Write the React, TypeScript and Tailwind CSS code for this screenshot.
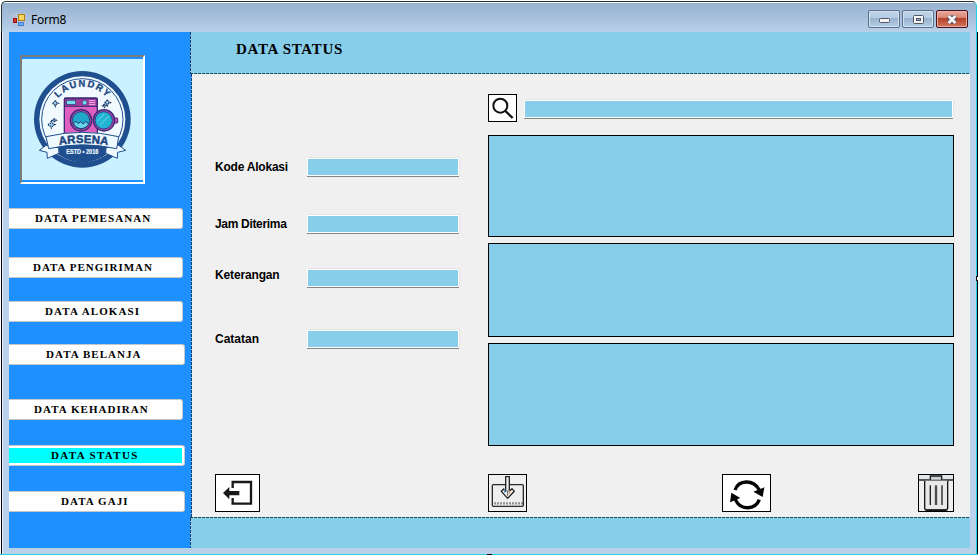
import React from "react";

type NavItem = { label: string; box: string; text: string; active?: boolean };

const navItems: NavItem[] = [
  { label: "DATA PEMESANAN", box: "mt-[24px] w-[174px]", text: "pl-[26px] tracking-[1.06px]" },
  { label: "DATA PENGIRIMAN", box: "mt-[28px] w-[174px]", text: "pl-[24px] tracking-[1px]" },
  { label: "DATA ALOKASI", box: "mt-[23px] w-[174px]", text: "pl-[36px] tracking-[1.12px]" },
  { label: "DATA BELANJA", box: "mt-[22px] w-[176px]", text: "pl-[37px] tracking-[1.04px]" },
  { label: "DATA KEHADIRAN", box: "mt-[34px] w-[174px]", text: "pl-[25px] tracking-[1.05px]" },
  { label: "DATA STATUS", box: "mt-[25px] w-[176px]", text: "pl-[42px] tracking-[1.35px]", active: true },
  { label: "DATA GAJI", box: "mt-[25px] w-[176px]", text: "pl-[52px] tracking-[1.08px]" },
];

const fields = [
  { label: "Kode Alokasi", row: "mt-[84px]", text: "pl-[23px] pt-[2px] tracking-[-0.22px]" },
  { label: "Jam Diterima", row: "mt-[38px]", text: "pl-[23px] pt-[2px] tracking-[-0.32px]" },
  { label: "Keterangan", row: "mt-[35px]", text: "pl-[23px] -mt-[1px] tracking-[-0.15px]" },
  { label: "Catatan", row: "mt-[42px]", text: "pl-[23px] pt-[2px] tracking-[0px]" },
];

function Logo() {
  return (
    <svg viewBox="36 42 363 363" className="block h-[121px] w-[121px]">
      <rect x="36" y="42" width="363" height="363" fill="#c9f1ff" />
      <circle cx="217" cy="223" r="145" fill="#1f4f8f" />
      <circle cx="217" cy="223" r="129" fill="#f1faff" />
      <circle cx="217" cy="223" r="122" fill="none" stroke="#1f4f8f" strokeWidth="3" />
      <path d="M108 285 A122 122 0 0 0 326 285 Q217 248 108 285Z" fill="#1f4f8f" />
      <path id="arcTop" d="M144 160 A95 95 0 0 1 292 160" fill="none" />
      <text fontSize="28" fontWeight="700" fill="#1d477f" stroke="#1d477f" strokeWidth="1" letterSpacing="4.6" fontFamily="Liberation Sans, sans-serif">
        <textPath href="#arcTop" startOffset="1">LAUNDRY</textPath>
      </text>
      <rect x="163" y="159" width="99" height="108" rx="4" fill="#df5fc0" stroke="#3b2a76" strokeWidth="4" />
      <path d="M164 161H261V184H164Z" fill="#a33a9a" stroke="#3b2a76" strokeWidth="3" />
      <rect x="170" y="166" width="27" height="12" fill="#79dbed" stroke="#24407a" strokeWidth="2" />
      <circle cx="224" cy="173" r="7" fill="#79dbed" stroke="#24407a" strokeWidth="2" />
      <path d="M237 167H256M237 173H256M237 179H256" stroke="#f3b7e6" strokeWidth="3" />
      <rect x="311" y="219" width="12" height="15" rx="2" fill="#d44fb5" stroke="#3b2a76" strokeWidth="3" />
      <circle cx="282" cy="226" r="32" fill="#b347ad" stroke="#3b2a76" strokeWidth="4" />
      <circle cx="281" cy="226" r="26" fill="#22b4d2" stroke="#28457e" strokeWidth="3" />
      <path d="M262 228L283 207M270 240L296 214" stroke="#4ccbe4" strokeWidth="4" fill="none" />
      <circle cx="213" cy="226" r="32" fill="#b347ad" stroke="#3b2a76" strokeWidth="4" />
      <circle cx="213" cy="226" r="26" fill="#20a7c9" stroke="#28457e" strokeWidth="3" />
      <path d="M190 234L198 229L204 236L212 230L219 237L227 230L236 236Q231 249 213 251Q196 249 190 234Z" fill="#69d5ec" stroke="#1b3f70" strokeWidth="3" />
      <g fill="#a9e2f7" stroke="#1d3766" strokeWidth="4" strokeDasharray="4 2">
        <path d="M136 166l3 6 6 3-6 3-3 6-3-6-6-3 6-3z" />
        <path d="M292 164l3 6 6 3-6 3-3 6-3-6-6-3 6-3z" />
        <path d="M124 229l4 7 7 3-7 3-4 7-4-7-7-3 7-3z" />
        <path d="M133 220l2 4 4 2-4 2-2 4-2-4-4-2 4-2zM283 177l2 3 3 2-3 2-2 3-2-3-3-2 3-2z" />
      </g>
      <path d="M108 301L88 316L111 322L112 340L147 325L146 308ZM326 301L347 316L323 322L322 340L287 325L288 308Z" fill="#effaff" stroke="#1f4f8f" strokeWidth="3" />
      <path d="M108 275Q217 249 326 275L320 311Q217 288 116 311Z" fill="#effaff" stroke="#1f4f8f" strokeWidth="3" />
      <path id="arcName" d="M148 300Q217 288 292 300" fill="none" />
      <text fontSize="34" fontWeight="700" fill="#1d477f" stroke="#1d477f" strokeWidth="1.5" letterSpacing="0.5" fontFamily="Liberation Sans, sans-serif">
        <textPath href="#arcName">ARSENA</textPath>
      </text>
      <text x="169" y="327" textLength="96" lengthAdjust="spacingAndGlyphs" fontSize="21" fontWeight="700" fill="#f1faff" stroke="#f1faff" strokeWidth="0.6" fontFamily="Liberation Sans, sans-serif">
        ESTD • 2016
      </text>
    </svg>
  );
}

function TextInput({ className }: { className: string }) {
  return (
    <div className={`h-[19px] border-b border-[#858585] shadow-[1px_-1px_0_#e5e5e5] ${className}`}>
      <div className="h-[18px] border border-white bg-[#87ceeb]" />
    </div>
  );
}

function FormIcon() {
  return (
    <svg viewBox="36 39 42 42" className="h-[14px] w-[14px]" shapeRendering="crispEdges">
      <rect x="36" y="39" width="42" height="42" fill="#b3c3da" />
      <rect x="55" y="43" width="19" height="19" fill="#fbd560" stroke="#b47d0a" strokeWidth="3" />
      <rect x="40" y="55" width="10" height="13" fill="#d8372d" stroke="#951510" strokeWidth="3" />
      <rect x="55" y="67" width="14" height="10" fill="#68a8fa" stroke="#2b64c8" strokeWidth="2" />
    </svg>
  );
}

function CaptionButtons() {
  const cool =
    "flex h-[18px] w-[32px] items-center justify-center rounded-[2px] border border-[#5d6f89] bg-[linear-gradient(#c1d4e9_0%,#b5cce4_44%,#98b2cd_45%,#b5d0e9_100%)] shadow-[inset_0_0_0_1px_#d2e1f0]";
  return (
    <div className="mr-[1px] mt-[8px] flex gap-[2px]">
      <div className={cool}>
        <svg viewBox="0 0 11 5" className="mt-[3px] h-[5px] w-[11px]">
          <rect x=".5" y=".5" width="10" height="4" rx="1" fill="#f4f4f4" stroke="#525665" />
        </svg>
      </div>
      <div className={cool}>
        <svg viewBox="0 0 11 9" className="h-[9px] w-[11px]">
          <rect x=".5" y=".5" width="10" height="8" rx="1" fill="#f4f4f4" stroke="#525665" />
          <rect x="3.5" y="3.5" width="4" height="2" fill="#91aaca" stroke="#525665" />
        </svg>
      </div>
      <div className="flex h-[18px] w-[32px] items-center justify-center rounded-[2px] border border-[#48131b] bg-[linear-gradient(#e9a99c_0%,#d98373_44%,#b63e27_45%,#d4765b_100%)] shadow-[inset_0_0_0_1px_#e8aea4]">
        <svg viewBox="0 0 12 9" className="h-[9px] w-[12px]">
          <path d="M2.5 1L9.5 8M9.5 1L2.5 8" stroke="#525665" strokeWidth="4.8" />
          <path d="M2.6 1.1L9.4 7.9M9.4 1.1L2.6 7.9" stroke="#f7f7f7" strokeWidth="2.8" />
        </svg>
      </div>
    </div>
  );
}

function ExitIcon() {
  return (
    <svg viewBox="48 45 129 108" className="block h-full w-full">
      <path d="M98 84V66H153V131H98V114" fill="none" stroke="#191919" strokeWidth="7" />
      <path d="M69 99L88 81V93H118V106H88V118Z" fill="#191919" />
    </svg>
  );
}

function SaveIcon() {
  return (
    <svg viewBox="57 135 111 108" className="block h-full w-full">
      <rect x="67" y="164" width="93" height="65" rx="3" fill="#eeeeee" stroke="#2b2b2b" strokeWidth="4" />
      <path d="M73.5 220H159" stroke="#333" strokeWidth="7" strokeDasharray="3 6" />
      <path d="M107 140H118V184L126 176L133 184L113 205L94 184L101 177L107 184Z" fill="#f1f1f1" stroke="#222" strokeWidth="4" strokeLinejoin="round" />
      <path d="M104 177V189" stroke="#65a6d8" strokeWidth="3" />
      <path d="M119 181V192" stroke="#ed9a58" strokeWidth="3" />
      <path d="M113 181V197" stroke="#555" strokeWidth="3" />
    </svg>
  );
}

function RefreshIcon() {
  return (
    <svg viewBox="69 135 141 108" className="block h-full w-full">
      <path d="M105 180C116 149 160 147 178 180M178 209C166 241 120 242 106 208" fill="none" stroke="#050505" strokeWidth="10" />
      <path d="M160 185L193 172L188 201ZM90 217L94 188L121 204Z" fill="#050505" />
    </svg>
  );
}

function TrashIcon() {
  return (
    <svg viewBox="657 135 102 108" className="block h-full w-full">
      <rect x="657" y="135" width="102" height="16" fill="#e3e7ea" />
      <path d="M657 150H759" stroke="#202326" strokeWidth="4" />
      <path d="M691 149V138H725V149" fill="#ccd1d4" stroke="#181818" strokeWidth="4" />
      <path d="M674 152V233Q674 241 682 241H735Q743 241 743 233V152" fill="#e8e8e8" stroke="#151515" strokeWidth="4" />
      <path d="M679 240H739" stroke="#151515" strokeWidth="5" />
      <path d="M691 166V225M726 166V225" stroke="#202020" strokeWidth="4" />
      <path d="M708 166V225" stroke="#4b4b4b" strokeWidth="7" />
    </svg>
  );
}

const dashX = "h-px bg-[repeating-linear-gradient(90deg,#1d4d60_0_3px,#87ceeb_3px_4px)]";
const dashY = "w-px bg-[repeating-linear-gradient(180deg,#153f70_0_3px,#87ceeb_3px_4px)]";

export default function App() {
  return (
    <div className="relative h-[555px] w-[978px] overflow-hidden bg-[linear-gradient(90deg,#fff_1px,#000_1px_2px,#e8f1fa_2px_3px,#b9d1ea_3px)] font-['Liberation_Sans',Arial,sans-serif] text-black">
      <div className="flex h-full w-full flex-col border-b border-[#22d0ea] bg-[linear-gradient(270deg,#000_1px,#22d0ea_1px_2px,transparent_2px)] pl-[9px] pr-[8px]">
        <header className="-ml-[9px] -mr-[8px] h-[32px] shrink-0 bg-white pt-px">
          <div className="ml-px mr-px flex h-[31px] justify-between rounded-t-[5px] border-l border-r border-t border-l-[#26352c] border-r-[#22d0ea] border-t-[#26352c] bg-[linear-gradient(#f4f8fb_0_1px,#98b3d0_1px,#a6bfdb_50%,#b9d0ea)] pl-[10px] pr-[7px]">
            <div className="flex pt-[11px]">
              <FormIcon />
              <span className="ml-[5px] font-['Noto_Sans',sans-serif] text-[12px] leading-[14px] tracking-[-0.3px]">Form8</span>
            </div>
            <CaptionButtons />
          </div>
        </header>

        <div className="flex h-[516px] w-[961px] shrink-0">
          <aside className="w-[181px] bg-[#1e90ff] pt-[23px]">
            <div className="ml-[11px] h-[129px] w-[125px] border-2 border-b-white border-l-[#7c7c7c] border-r-white border-t-[#7c7c7c] py-[2px]">
              <Logo />
            </div>
            <nav>
              {navItems.map((item) => (
                <button
                  key={item.label}
                  className={`block h-[21px] rounded-r-[3px] border-b border-r border-t border-[#c4c8cb] text-left font-['Liberation_Serif',serif] text-[11px] font-bold leading-[19px] ${item.active ? "bg-white py-[2px] pr-[2px]" : "bg-[#fefefe]"} ${item.box}`}
                >
                  <span className={`block whitespace-nowrap ${item.active ? "h-[15px] bg-[#00ffff] leading-[15px]" : ""} ${item.text}`}>
                    {item.label}
                  </span>
                </button>
              ))}
            </nav>
          </aside>

          <main className="flex w-[780px] flex-col">
            <div className="flex h-[41px] bg-[#87ceeb]">
              <div className={dashY} />
              <h1 className="pl-[45px] pt-[9px] font-['Liberation_Serif',serif] text-[15px] font-bold leading-[17px] tracking-[0.7px]">DATA STATUS</h1>
            </div>
            <div className={dashX} />

            <div className="flex h-[443px] bg-[#f0f0f0]">
              <div className="w-px bg-[#1e90ff]" />
              <div className={dashY} />
              <section className="flex w-[296px] flex-col">
                {fields.map((field) => (
                  <div key={field.label} className={`flex h-[19px] ${field.row}`}>
                    <label className={`block w-[115px] whitespace-nowrap text-[12px] font-bold leading-[14px] ${field.text}`}>{field.label}</label>
                    <TextInput className="w-[152px]" />
                  </div>
                ))}
                <button className="ml-[23px] mt-[125px] h-[38px] w-[45px] border border-black bg-white"><ExitIcon /></button>
              </section>

              <section className="w-[466px] pt-[20px]">
                <div className="flex">
                  <button className="h-[28px] w-[29px] border border-black bg-white">
                    <svg viewBox="42 30 81 78" className="block h-full w-full">
                      <circle cx="76" cy="62" r="21" fill="none" stroke="#111" strokeWidth="6" />
                      <path d="M91 78L113 99" stroke="#111" strokeWidth="7" />
                    </svg>
                  </button>
                  <TextInput className="ml-[7px] mt-[6px] w-[429px]" />
                </div>
                <div className="mt-[13px] h-[102px] border border-black bg-[#87ceeb]" />
                <div className="mt-[6px] h-[94px] border border-black bg-[#87ceeb]" />
                <div className="mt-[6px] h-[103px] border border-black bg-[#87ceeb]" />
                <div className="mt-[28px] flex justify-between">
                  <button className="h-[38px] w-[39px] border border-black bg-[#f0f0f0]"><SaveIcon /></button>
                  <button className="ml-[48px] h-[38px] w-[49px] border border-black bg-white"><RefreshIcon /></button>
                  <button className="h-[38px] w-[36px] border border-black bg-[#f0f0f0]"><TrashIcon /></button>
                </div>
              </section>
            </div>

            <div className={dashX} />
            <div className="flex grow bg-[#87ceeb]"><div className={dashY} /></div>
          </main>
        </div>
      </div>
      <div className="absolute bottom-0 left-[487px] h-px w-[5px] bg-black" />
      <div className="absolute right-0 top-[276px] h-[5px] w-[2px] border border-r-0 border-black bg-white" />
    </div>
  );
}
